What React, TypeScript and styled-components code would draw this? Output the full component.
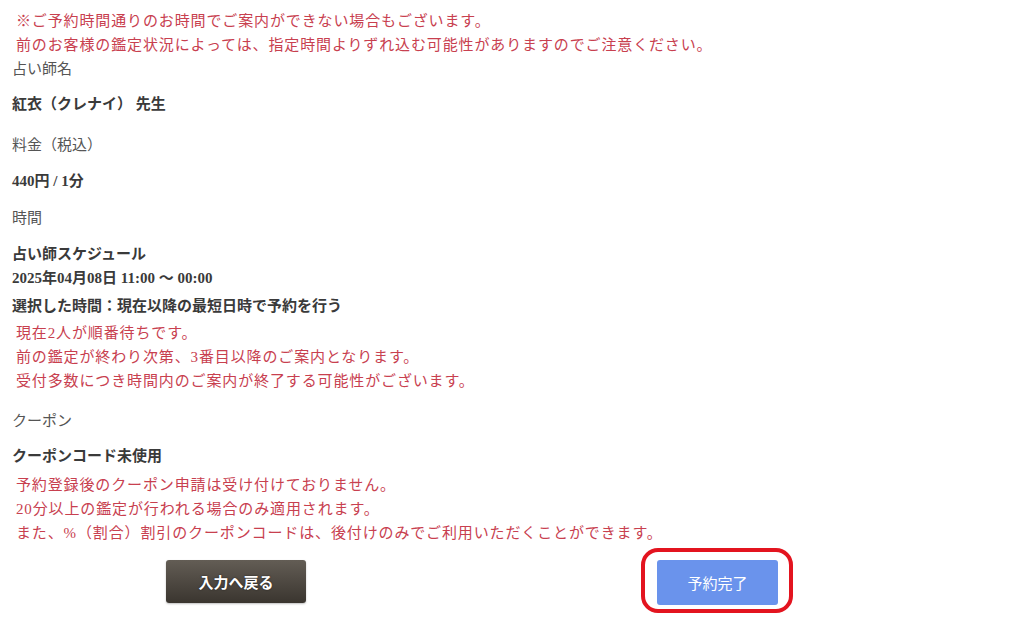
import React from "react";
import styled, { createGlobalStyle } from "styled-components";

const GlobalStyle = createGlobalStyle`
  html, body {
    margin: 0;
    padding: 0;
    background: #ffffff;
  }
  body {
    font-family: "Liberation Serif", "Noto Sans CJK JP", serif;
    font-size: 15px;
    color: #333;
  }
`;

const Page = styled.div`
  width: 1024px;
  height: 621px;
  padding: 9px 0 0 12px;
  box-sizing: border-box;
  overflow: hidden;
`;

const Notice = styled.div<{ $mt?: number }>`
  margin-top: ${(p) => p.$mt ?? 0}px;
  padding-left: 4px;
  color: #c8404f;
  font-size: 15px;
  line-height: 24px;
  letter-spacing: 0.87px;
  white-space: nowrap;
`;

const Label = styled.div<{ $mt?: number }>`
  margin-top: ${(p) => p.$mt ?? 0}px;
  color: #555;
  font-size: 15px;
  line-height: 24px;
`;

const Value = styled.div<{ $mt?: number }>`
  margin-top: ${(p) => p.$mt ?? 0}px;
  color: #3a3a3a;
  font-size: 15px;
  font-weight: 700;
  line-height: 24px;
  white-space: nowrap;
`;

const Actions = styled.div`
  display: grid;
  grid-template-columns: 448px 515px;
  margin-top: 15px;
  align-items: start;
`;

const Cell = styled.div`
  display: flex;
  justify-content: center;
`;

const BackButton = styled.button`
  width: 140px;
  height: 43px;
  border: none;
  border-radius: 3px;
  background: linear-gradient(#635d55, #3a352f);
  color: #fff;
  font-family: "Liberation Serif", "Noto Sans CJK JP", serif;
  font-size: 15px;
  font-weight: 700;
  text-shadow: 0 0 2px rgba(0, 0, 0, 0.6);
  box-shadow: 0 1px 2px rgba(0, 0, 0, 0.25);
  cursor: pointer;
`;

const Highlight = styled.div`
  position: relative;

  &::after {
    content: "";
    position: absolute;
    left: -16px;
    right: -15px;
    top: -12px;
    bottom: -8px;
    border: 4px solid #e3141f;
    border-radius: 17px;
    pointer-events: none;
  }
`;

const SubmitButton = styled.button`
  display: block;
  width: 121px;
  height: 45px;
  border: none;
  border-radius: 3px;
  background: #6a93ec;
  color: #fff;
  font-family: "Liberation Serif", "Noto Sans CJK JP", serif;
  font-size: 15px;
  cursor: pointer;
`;

export default function App() {
  return (
    <>
      <GlobalStyle />
      <Page>
        <Notice>※ご予約時間通りのお時間でご案内ができない場合もございます。</Notice>
        <Notice>前のお客様の鑑定状況によっては、指定時間よりずれ込む可能性がありますのでご注意ください。</Notice>

        <Label>占い師名</Label>
        <Value $mt={11}>紅衣（クレナイ） 先生</Value>

        <Label $mt={17}>料金（税込）</Label>
        <Value $mt={12}>440円 / 1分</Value>

        <Label $mt={13}>時間</Label>
        <Value $mt={12}>占い師スケジュール</Value>
        <Value>2025年04月08日 11:00 ～ 00:00</Value>
        <Value $mt={4}>選択した時間：現在以降の最短日時で予約を行う</Value>
        <Notice $mt={3}>現在2人が順番待ちです。</Notice>
        <Notice>前の鑑定が終わり次第、3番目以降のご案内となります。</Notice>
        <Notice>受付多数につき時間内のご案内が終了する可能性がございます。</Notice>

        <Label $mt={16}>クーポン</Label>
        <Value $mt={11}>クーポンコード未使用</Value>
        <Notice $mt={5}>予約登録後のクーポン申請は受け付けておりません。</Notice>
        <Notice>20分以上の鑑定が行われる場合のみ適用されます。</Notice>
        <Notice>また、%（割合）割引のクーポンコードは、後付けのみでご利用いただくことができます。</Notice>

        <Actions>
          <Cell>
            <BackButton>入力へ戻る</BackButton>
          </Cell>
          <Cell>
            <Highlight>
              <SubmitButton>予約完了</SubmitButton>
            </Highlight>
          </Cell>
        </Actions>
      </Page>
    </>
  );
}
